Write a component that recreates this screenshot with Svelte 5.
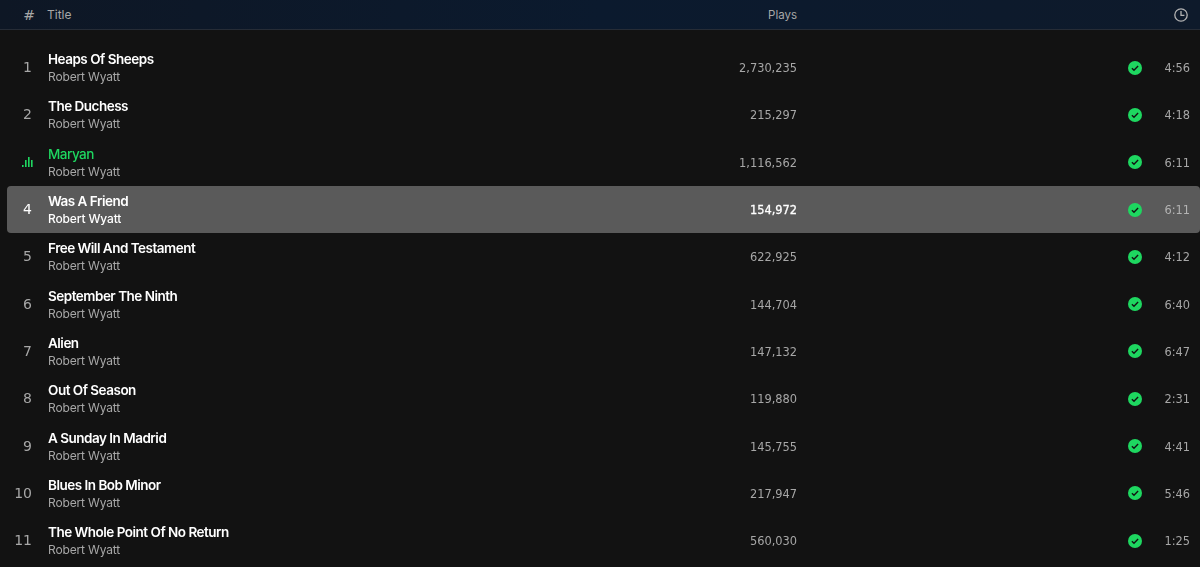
<script>
  const tracks = [
    ['Heaps Of Sheeps', '2,730,235', '4:56'],
    ['The Duchess', '215,297', '4:18'],
    ['Maryan', '1,116,562', '6:11'],
    ['Was A Friend', '154,972', '6:11'],
    ['Free Will And Testament', '622,925', '4:12'],
    ['September The Ninth', '144,704', '6:40'],
    ['Alien', '147,132', '6:47'],
    ['Out Of Season', '119,880', '2:31'],
    ['A Sunday In Madrid', '145,755', '4:41'],
    ['Blues In Bob Minor', '217,947', '5:46'],
    ['The Whole Point Of No Return', '560,030', '1:25']
  ];
  const playing = 2;
  const hovered = 3;
</script>

<div class="page">
  <header class="head">
    <span class="hash">#</span>
    <span class="head-title">Title</span>
    <span class="head-plays">Plays</span>
    <span class="head-time">
      <svg width="14" height="14" viewBox="0 0 14 14" fill="none" stroke="currentColor" stroke-width="1.3">
        <circle cx="7" cy="7" r="6.2" />
        <path d="M7 3V7.4H10.4" />
      </svg>
    </span>
  </header>

  <div class="list">
    {#each tracks as t, i}
      <div class="row" class:hovered={i === hovered}>
        <span class="num">
          {#if i === playing}
            <svg class="bars" width="11" height="12" viewBox="0 0 11 12" fill="#1ed760">
              <rect x="0" y="9" width="1.6" height="2" />
              <rect x="3" y="4" width="1.6" height="7" />
              <rect x="6" y="1" width="1.6" height="10" />
              <rect x="9" y="4" width="1.6" height="7" />
            </svg>
          {:else}
            {i + 1}
          {/if}
        </span>
        <div class="info">
          <div class="name" class:active={i === playing}>{t[0]}</div>
          <div class="artist">Robert Wyatt</div>
        </div>
        <span class="plays">{t[1]}</span>
        <span class="saved">
          <svg width="14" height="14" viewBox="0 0 14 14">
            <circle cx="7" cy="7" r="7" fill="#1ed760" />
            <path d="M3.9 7.2 6 9.2 10.1 5" fill="none" stroke="#121212" stroke-width="1.4" />
          </svg>
        </span>
        <span class="time">{t[2]}</span>
      </div>
    {/each}
  </div>
</div>

<style>
  :global(body) {
    background: #121212;
  }

  .page {
    width: 1200px;
    height: 567px;
    overflow: hidden;
    background: #121212;
    font-family: Inter, "Noto Sans", sans-serif;
    color: #a7a7a7;
  }

  .head {
    display: grid;
    grid-template-columns: 40px 550px 200px 1fr;
    align-items: center;
    height: 29px;
    margin-bottom: 14px;
    padding-right: 12px;
    padding-left: 7px;
    border-bottom: 1px solid #262c36;
    background: linear-gradient(90deg, #0e1725, #0b1a2e 50%, #0e1a2b);
    font-size: 11.5px;
  }

  .hash {
    padding-right: 12px;
    font-size: 14px;
    font-family: "DejaVu Sans", sans-serif;
    text-align: right;
  }

  .head-title {
    font-size: 12px;
  }

  .head-plays {
    text-align: right;
  }

  .head-time {
    display: flex;
    justify-content: flex-end;
    color: #b3b3b3;
  }

  /* own layer: text comes out greyscale-antialiased like the original */
  .list {
    will-change: transform;
  }

  .row {
    display: grid;
    grid-template-columns: 41px 549px 200px 1fr 48px;
    align-items: center;
    height: 47.3px;
    margin-left: 7px;
    padding-right: 10px;
    border-radius: 4px;
  }

  .row.hovered {
    background: #5a5a5a;
    color: #fff;
  }

  .num {
    display: flex;
    justify-content: flex-end;
    padding-right: 16px;
    padding-bottom: 1px;
    font-family: "DejaVu Sans", sans-serif;
    font-size: 14px;
  }

  .bars {
    margin-right: -1px;
  }

  .info {
    padding-top: 1px;
    line-height: 17px;
  }

  .name {
    color: #fff;
    font-size: 13.5px;
    font-weight: 600;
    letter-spacing: -0.5px;
  }

  .name.active {
    color: #1ed760;
    font-weight: 500;
  }

  .artist {
    font-size: 12px;
    letter-spacing: -0.15px;
  }

  .hovered .artist {
    font-weight: 500;
    color: #fff;
  }

  .plays {
    padding-top: 1px;
    font-family: "DejaVu Sans", sans-serif;
    font-size: 11.4px;
    text-align: right;
  }

  .hovered .plays {
    -webkit-text-stroke: 0.3px #fff;
  }

  .saved {
    display: flex;
    justify-content: flex-end;
  }

  .time {
    padding-top: 1px;
    font-family: "DejaVu Sans", sans-serif;
    font-size: 11.4px;
    text-align: right;
  }

  .hovered .time {
    color: #b3b3b3;
  }
</style>
